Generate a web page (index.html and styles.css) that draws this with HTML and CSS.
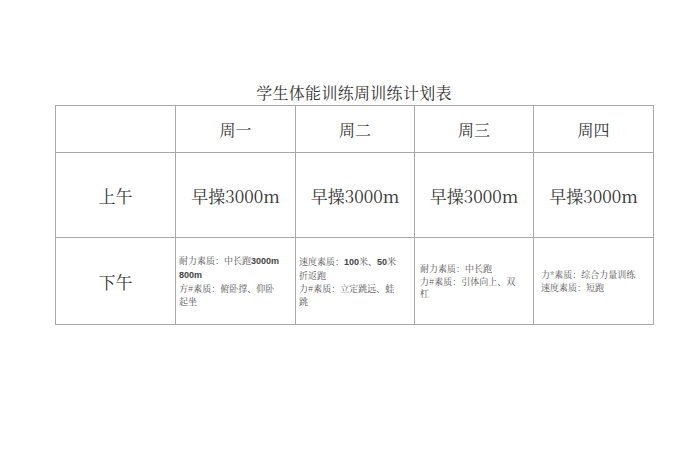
FILE: index.html
```html
<!DOCTYPE html>
<html lang="zh-CN">
<head>
<meta charset="utf-8">
<title>学生体能训练周训练计划表</title>
<link rel="stylesheet" href="styles.css">
</head>
<body>
<div class="page">
  <h1 class="title">学生体能训练周训练计划表</h1>
  <table class="plan">
    <colgroup>
      <col class="c0"><col class="c1"><col class="c2"><col class="c3"><col class="c4">
    </colgroup>
    <tr class="head">
      <td></td><td>周一</td><td>周二</td><td>周三</td><td>周四</td>
    </tr>
    <tr class="am">
      <td class="label">上午</td>
      <td>早操3000m</td><td>早操3000m</td><td>早操3000m</td><td>早操3000m</td>
    </tr>
    <tr class="pm">
      <td class="label">下午</td>
      <td class="note n1">耐力素质：中长跑<b>3000m</b><br><b>800m</b><br>方#素质：俯卧撑、仰卧<br>起坐</td>
      <td class="note n2">速度素质：<b>100</b>米、<b>50</b>米<br>折返跑<br>力#素质：立定跳远、蛙<br>跳</td>
      <td class="note n3">耐力素质：中长跑<br>力#素质：引体向上、双<br>杠</td>
      <td class="note n4">力*素质：综合力量训练<br>速度素质：短跑</td>
    </tr>
  </table>
</div>
</body>
</html>
```
FILE: styles.css
```css
html, body {
  margin: 0;
  padding: 0;
  background: #ffffff;
}
body {
  font-family: "Noto Serif CJK SC", "Liberation Serif", "Noto Sans CJK SC", serif;
  color: #333333;
}
.page {
  width: 598px;
  padding: 80px 0 0 55px;
}
.title {
  margin: 0;
  height: 25px;
  font-size: 16px;
  font-weight: normal;
  line-height: 25px;
  text-align: center;
  letter-spacing: 0.3px;
  color: #333;
}
.plan {
  border-collapse: collapse;
  table-layout: fixed;
  width: 599px;
}
.c0 { width: 120px; }
.c1 { width: 120px; }
.c2 { width: 119px; }
.c3 { width: 119px; }
.c4 { width: 120px; }
.plan td {
  border: 1px solid #a8a8a8;
  padding: 0;
  text-align: center;
  vertical-align: middle;
}
.head td {
  height: 46px;
  font-size: 16px;
}
.am td {
  height: 84px;
  font-size: 17px;
}
.pm td {
  height: 84px;
  font-size: 17px;
}
.plan td.note {
  text-align: left;
  font-family: "Noto Serif CJK SC", "Noto Sans CJK SC", serif;
  font-size: 9px;
  line-height: 13px;
  color: #555;
  padding: 0 2px 0 3px;
}
.note b {
  font-family: "Liberation Sans", sans-serif;
  font-weight: bold;
  color: #444;
}
.plan td.n3 { padding-left: 5px; line-height: 12.5px; padding-top: 2px; }
.plan td.n4 { padding-left: 7px; }
```
